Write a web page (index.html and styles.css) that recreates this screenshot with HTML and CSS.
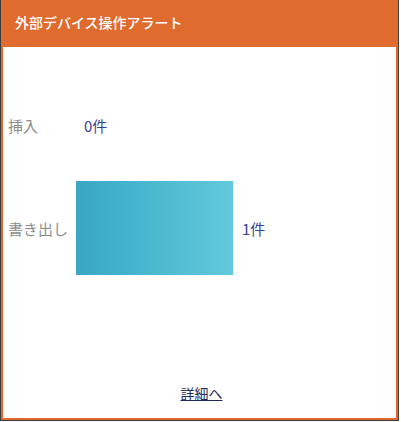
FILE: index.html
```html
<!DOCTYPE html>
<html lang="ja">
<head>
    <meta charset="UTF-8">
    <meta name="viewport" content="width=device-width, initial-scale=1.0">
    <title>外部デバイス操作アラート</title>
    <link rel="stylesheet" href="styles.css">
</head>
<body>

    <!-- Alert widget -->
    <div class="panel">
        <div class="card">
            <div class="card-header">外部デバイス操作アラート</div>

            <div class="card-body">
                <div class="row row-insert">
                    <span class="row-label">挿入</span>
                    <div class="bar" style="width: 0px;"></div>
                    <span class="row-value">0件</span>
                </div>
                <div class="row row-export">
                    <span class="row-label">書き出し</span>
                    <div class="bar" style="width: 157px;"></div>
                    <span class="row-value">1件</span>
                </div>
            </div>

            <div class="card-footer">
                <a href="#" class="detail-link">詳細へ</a>
            </div>
        </div>
    </div>

</body>
</html>
```

FILE: styles.css
```css
* {
    margin: 0;
    padding: 0;
    box-sizing: border-box;
}

body {
    font-family: "Noto Sans CJK JP", "Noto Sans", sans-serif;
    background-color: #fff;
    color: #333;
}

/* Widget frame */
.panel {
    width: 399px;
    height: 421px;
    border: 1px solid #3c3c3c;
    border-top: none;
}

.card {
    height: 100%;
    display: flex;
    flex-direction: column;
    border: 2px solid #e0692d;
    border-top: none;
    background-color: #fff;
}

.card-header {
    height: 47px;
    margin: 0 -2px;
    background-color: #df6b2f;
    color: #fff;
    font-size: 14px;
    font-weight: 500;
    display: flex;
    align-items: center;
    padding-left: 14px;
    padding-bottom: 3px;
}

/* Rows */
.card-body {
    padding: 63px 0 0 5px;
    display: flex;
    flex-direction: column;
    gap: 41px;
}

.row {
    display: flex;
    align-items: center;
}

.row-insert {
    height: 30px;
}

.row-export {
    height: 94px;
}

.row-label {
    width: 68px;
    font-size: 15px;
    color: #8c8c8c;
}

.bar {
    height: 94px;
    background: linear-gradient(to right, #3aa6c4, #3fb1cc 25%, #64c9dc);
}

.row-insert .bar {
    height: 0;
}

.row-value {
    margin-left: 8px;
    font-size: 15px;
    color: #3a3f8e;
}

.row-export .row-value {
    margin-left: 9px;
}

/* Footer link */
.card-footer {
    margin-top: auto;
    text-align: center;
    padding: 0 0 14px 4px;
}

.detail-link {
    font-size: 14px;
    color: #1f2a5c;
    text-decoration: underline;
}
```
